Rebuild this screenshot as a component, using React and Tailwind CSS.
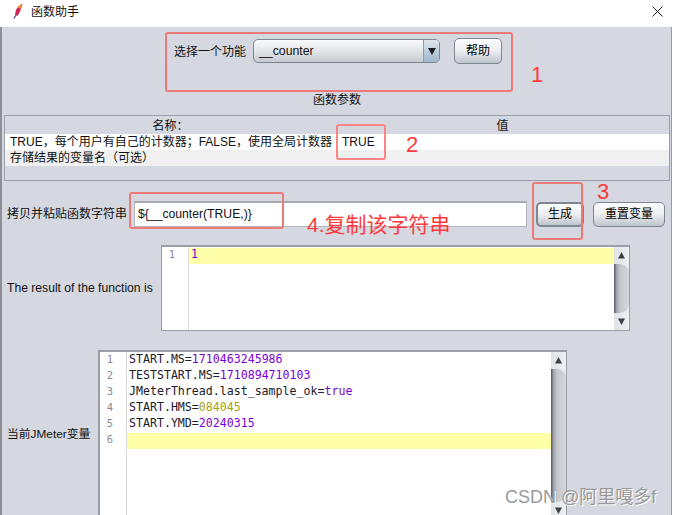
const sans = "font-['Liberation_Sans','Noto_Sans_CJK_SC',sans-serif]";
const mono = "font-['DejaVu_Sans_Mono','Noto_Sans_CJK_SC',monospace]";

function Btn({ children, className = "" }) {
  return (
    <div className={"flex items-center justify-center rounded-[5px] border border-[#7e8791] bg-gradient-to-b from-[#fdfdfe] via-[#eceef1] to-[#bfc4cc] text-[12px] text-black " + className}>
      {children}
    </div>
  );
}

function Arrow({ down }) {
  return (
    <svg width="9" height="9" viewBox="0 0 9 9">
      <path d={down ? "M1 1.5h7L4.5 8z" : "M4.5 1L8 7.5H1z"} fill="#3c3f44" />
    </svg>
  );
}

function Scrollbar() {
  return (
    <div className="flex h-full w-[15px] shrink-0 flex-col bg-[#e9ebef]">
      <div className="flex h-[17px] shrink-0 items-center justify-center bg-gradient-to-r from-[#dfe2e7] to-[#eef0f3]"><Arrow /></div>
      <div className="min-h-0 flex-1 rounded-tr-[9px] rounded-br-[9px] bg-[linear-gradient(to_right,#55585e_0%,#a4a7ad_18%,#c8cad0_45%,#d3d5da_100%)]" />
      <div className="flex h-[17px] shrink-0 items-center justify-center bg-gradient-to-r from-[#dfe2e7] to-[#eef0f3]"><Arrow down /></div>
    </div>
  );
}

function Editor({ lines, active, className = "", gutter }) {
  return (
    <div className={"flex border border-t-2 border-[#9a9ea8] bg-white " + className}>
      <div className={"shrink-0 border-r border-[#d9d9d9] bg-white pt-px " + gutter}>
        {lines.map((_, i) => (
          <div key={i} className={mono + " h-4 pr-[13px] text-right text-[10.5px] leading-[12px] text-[#8a8a96]"}>{i + 1}</div>
        ))}
      </div>
      <div className="min-w-0 flex-1 pt-px">
        {lines.map((l, i) => (
          <div key={i} className={mono + " h-4 whitespace-pre pl-[2px] text-[11.6px] leading-[12px] text-[#20202a] " + (i === active ? "bg-[#ffffaa]" : "")}>{l}</div>
        ))}
      </div>
      <Scrollbar />
    </div>
  );
}

const P = ({ children }) => <span className="text-[#7d00d6]">{children}</span>;

function Feather() {
  return (
    <svg width="10" height="15" viewBox="0 0 10 15">
      <path d="M9.5 0C7 .8 4.5 3 3.2 5.5 2.5 7.5 2.2 9.5 2 11.5l2.6.3C6.5 9.5 8.5 4.5 9.5 0z" fill="#c9265a" />
      <path d="M9.5 0C7.6.7 6 2 4.8 3.5L7.6 5C8.4 3.4 9 1.7 9.5 0z" fill="#f0942a" />
      <path d="M2.6 11.5L1 14.5" stroke="#4d2a66" strokeWidth="1.1" fill="none" />
    </svg>
  );
}

export default function App() {
  return (
    <div className={sans + " relative h-[515px] w-[674px] overflow-hidden bg-white text-[12px] text-[#111]"}>
      <div className="flex h-[27px] items-center pb-[4px] pl-[13px] pr-[11px]">
        <Feather />
        <span className="ml-[8px] text-[12px]">函数助手</span>
        <svg className="ml-auto" width="11" height="11" viewBox="0 0 11 11">
          <path d="M.5.5l10 10M10.5.5l-10 10" stroke="#222" strokeWidth="1" fill="none" />
        </svg>
      </div>

      <div className="mr-[2px] h-[488px] border-x-2 border-x-[#8f9095] bg-[#d5d8e0] border-r border-r-[#9a9ca2]">
        {/* function selector */}
        <div className="flex h-[38px] items-start pl-[172px] pt-[12px]">
          <span className="mt-[4px] text-[12px]">选择一个功能</span>
          <div className="ml-[7px] flex h-[24px] w-[187px] overflow-hidden rounded-[5px] border border-[#7e8791] bg-gradient-to-b from-[#fbfbfc] via-[#e3e5e9] to-[#c6cad1]">
            <span className="flex-1 pl-[5px] text-[12.3px] leading-[22px]">__counter</span>
            <div className="flex w-[16px] items-center justify-center border-l border-[#8e9aa8] bg-gradient-to-b from-[#dfe6ee] to-[#9fb6cb]">
              <svg width="8" height="7" viewBox="0 0 8 7"><path d="M0 0h8L4 7z" fill="#1c1e22" /></svg>
            </div>
          </div>
          <Btn className="ml-[14px] -mt-px h-[26px] w-[48px]">帮助</Btn>
        </div>

        <div className="mt-[28px] pl-[1px] text-center text-[12px] leading-[14px]">函数参数</div>

        {/* parameter table */}
        <div className="ml-[2px] mr-[1px] mt-[8px] h-[66px] border border-[#9a9ea8]">
          <div className="flex h-[18px] text-[12px] leading-[20px]">
            <div className="w-[331px] text-center">名称：</div>
            <div className="flex-1 text-center">值</div>
          </div>
          <div className="flex h-4 bg-white leading-4">
            <div className="w-[331px] pl-[5px]">TRUE，每个用户有自己的计数器；FALSE，使用全局计数器</div>
            <div className="pl-[6px]">TRUE</div>
          </div>
          <div className="h-4 bg-[#f0f0f0] pl-[5px] leading-4">存储结果的变量名（可选）</div>
        </div>

        {/* generated string */}
        <div className="mt-[20px] flex h-[26px] items-center pl-[5px]">
          <span className="w-[127px] text-[12px]">拷贝并粘贴函数字符串</span>
          <div className="flex h-[26px] w-[393px] items-center border border-[#b3b6bd] border-t-2 border-t-[#a7aab1] bg-white pl-[3px] text-[12.2px]">{"${__counter(TRUE,)}"}</div>
          <Btn className="ml-[9px] h-[25px] w-[48px] border-2 border-[#7ba3cc]">生成</Btn>
          <Btn className="ml-[9px] h-[25px] w-[72px]">重置变量</Btn>
        </div>

        {/* result */}
        <div className="mt-[18px] flex h-[86px] items-center pl-[5px]">
          <span className="w-[154px] whitespace-nowrap text-[12.15px]">The result of the function is</span>
          <Editor className="h-[86px] w-[469px]" gutter="w-[27px]" lines={[<P>1</P>]} active={0} />
        </div>

        {/* variables */}
        <div className="mt-[19px] flex h-[170px] items-center pl-[5px]">
          <span className="w-[91px] text-[11.8px]">当前JMeter变量</span>
          <Editor
            className="h-[170px] w-[469px] border-l-2"
            gutter="w-[27px]"
            active={5}
            lines={[
              <>START.MS=<P>1710463245986</P></>,
              <>TESTSTART.MS=<P>1710894710103</P></>,
              <>JMeterThread.last_sample_ok=<P>true</P></>,
              <>START.HMS=<span className="text-[#a89f10]">084045</span></>,
              <>START.YMD=<P>20240315</P></>,
              "",
            ]}
          />
        </div>
      </div>

      {/* annotations drawn over the screenshot */}
      <div className="absolute left-[165px] top-[32px] h-[60px] w-[348px] rounded-[3px] border-2 border-[#ee7a78]" />
      <div className="absolute left-[336px] top-[124px] h-[36px] w-[50px] rounded-[3px] border-2 border-[#f98684]" />
      <div className="absolute left-[129px] top-[192px] h-[37px] w-[155px] rounded-[3px] border-2 border-[#ee7a78]" />
      <div className="absolute left-[532px] top-[182px] h-[58px] w-[51px] rounded-[3px] border-2 border-[#ee7a78]" />
      <span className="absolute left-[531px] top-[61px] text-[22px] leading-[28px] text-[#ff3b3b]">1</span>
      <span className="absolute left-[406px] top-[131px] text-[22px] leading-[28px] text-[#ff3b3b]">2</span>
      <span className="absolute left-[597px] top-[178px] text-[22px] leading-[28px] text-[#ff3b3b]">3</span>
      <span className="absolute left-[307px] top-[211px] whitespace-nowrap text-[21px] leading-[28px] text-[#ff3b3b]">4.复制该字符串</span>
      <span className="absolute left-[505px] top-[486px] whitespace-nowrap text-[18px] leading-[22px] text-[#9a9a9a] [text-shadow:1px_1px_0_#ffffff]">CSDN @阿里嘎多f</span>
    </div>
  );
}
